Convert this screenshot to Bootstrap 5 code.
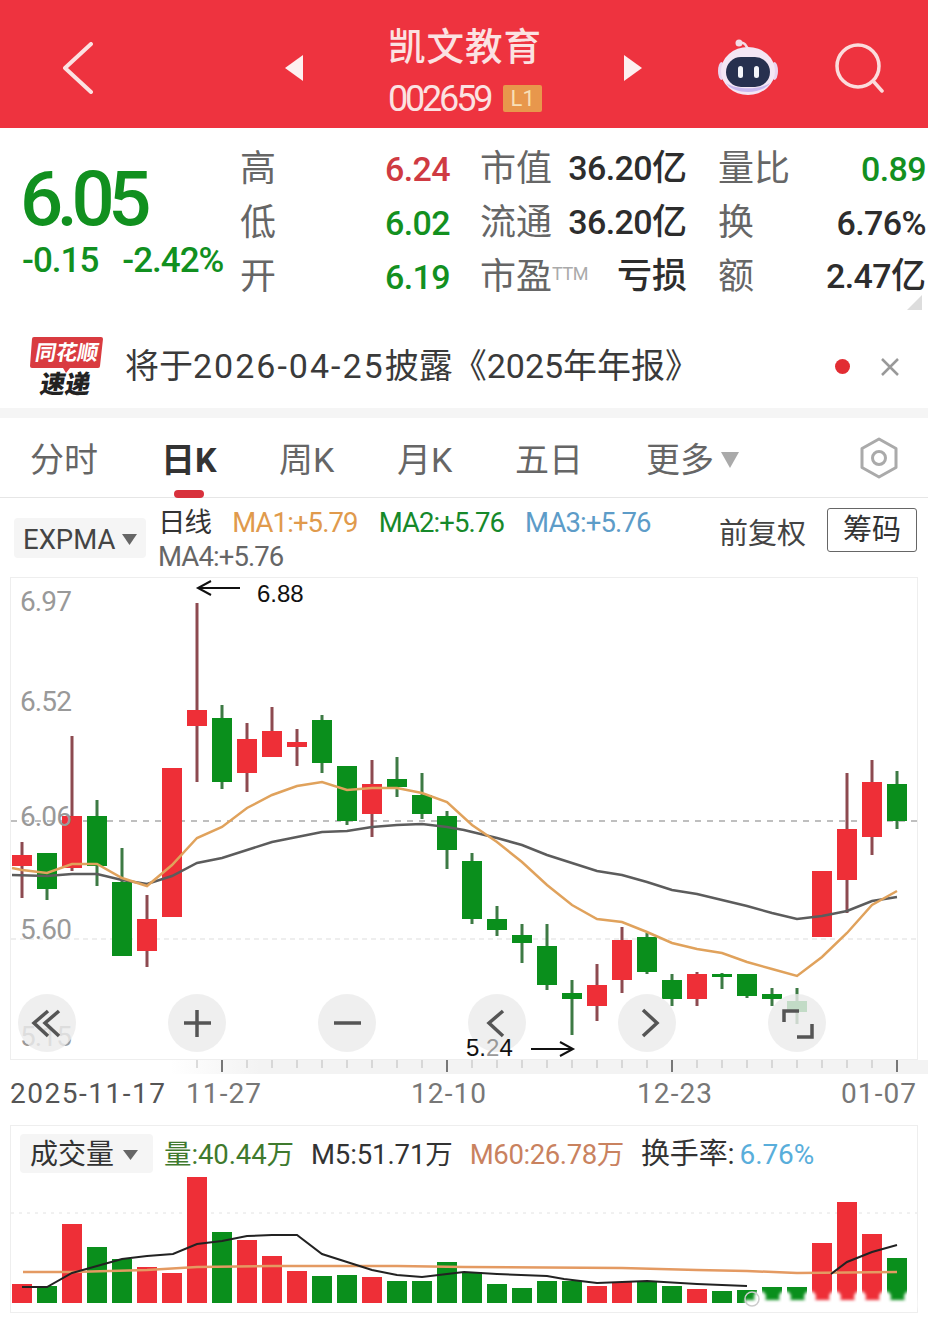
<!DOCTYPE html>
<html lang="zh-CN">
<head>
  <meta charset="UTF-8" />
  <title>凯文教育</title>
  <link href="https://cdn.jsdelivr.net/npm/bootstrap@5.3.0/dist/css/bootstrap.min.css" rel="stylesheet">
  <style>
    html, body { height: 1317px; overflow: hidden; }
    body { font-family: Roboto, "Noto Sans CJK SC", sans-serif; background: #fff; color: #333; }
    .stock-head { height: 128px; padding: 8px 0 0 63px; background: #ee333f; color: #fbe2e2; }
    .head-tri { margin-left: 192px; }
    .head-title { width: 236px; margin-left: 85px; padding-top: 4px; }
    .head-name { font-size: 37.5px; line-height: 46px; font-weight: 500; letter-spacing: 1px; }
    .head-code { margin-top: 11px; font-size: 36px; line-height: 36px; letter-spacing: -3.2px; }
    .head-l1 { width: 39px; height: 27px; margin-left: 13px; border-radius: 2px; background: #e8974c; font-size: 22px; line-height: 27px; letter-spacing: 0; text-align: center; color: #f8e0b8; }
    .head-robot { margin-left: 76px; }
    .head-search { margin-left: 57px; }

    .quote-box { height: 197px; position: relative; }
    .quote-main { width: 240px; padding: 33px 0 0 20px; color: #11901f; }
    .quote-price { font-size: 76px; line-height: 76px; font-weight: 500; letter-spacing: -6.4px; }
    .quote-sub { margin: 4px 0 0 2px; font-size: 35px; line-height: 40px; font-weight: 500; letter-spacing: -1px; white-space: nowrap; }
    .quote-sub span + span { margin-left: 24px; }
    .quote-grid { display: grid; grid-template-columns: 70px 140px 105px 132px 104px 135px; grid-auto-rows: 54px; padding-top: 14px; align-items: center; white-space: nowrap; }
    .q-label { font-size: 36px; color: #666; }
    .q-pad { padding-left: 30px; }
    .q-pad2 { padding-left: 31px; }
    .q-num { font-size: 34px; font-weight: 500; text-align: right; letter-spacing: -.6px; color: #2d2d2d; }
    .q-cn { font-size: 35px; font-weight: 500; letter-spacing: 0; }
    .q-red { color: #cf3a42; }
    .q-green { color: #13901f; }
    .q-ttm { font-size: 18px; color: #aaa; vertical-align: 9px; letter-spacing: -.5px; }
    .quote-corner { position: absolute; right: 6px; bottom: 15px; }

    .news-bar { height: 83px; padding-left: 30px; }
    .news-text { margin: 0 0 0 22px; font-size: 34px; color: #3a3a3a; white-space: nowrap; }
    .news-date { letter-spacing: 2px; }
    .news-dot { width: 15px; height: 15px; margin-left: auto; border-radius: 50%; background: #e22d33; }
    .news-close { margin: 0 29px 0 31px; }
    .gap-strip { height: 10px; background: #f5f5f5; }

    .tab-row { height: 80px; padding-left: 30px; border-bottom: 1px solid #e6e6e6; }
    .tab-item { position: relative; flex: 0 0 118px; height: 80px; padding: 4px 0 0; font-size: 34px; line-height: 76px; color: #666; white-space: nowrap; }
    .tab-item:hover { color: #666; }
    .tab-long { flex-basis: 131px; }
    .tab-on { font-weight: 700; color: #333; }
    .tab-on:hover { color: #333; }
    .tab-on::after { content: ""; position: absolute; left: 13px; bottom: 0; width: 30px; height: 8px; border-radius: 4px; background: #d8313c; }
    .tab-arrow { margin-left: 7px; vertical-align: 4px; }
    .tab-cfg { margin: 0 29px 0 auto; }

    .ind-row { height: 79px; padding-left: 14px; }
    .ind-chip { width: 132px; height: 40px; margin-top: 20px; padding-left: 9px; border-radius: 4px; background: #f5f5f5; font-size: 27.5px; line-height: 43px; color: #444; }
    .ind-chip svg { margin-left: 7px; vertical-align: 4px; }
    .ind-list { width: 540px; margin-left: 12px; padding-top: 8px; column-gap: 21px; font-size: 27.5px; line-height: 34px; letter-spacing: -.9px; }
    .ma1 { color: #e09a4c; }
    .ma2 { color: #16892a; }
    .ma3 { color: #5d9cc8; }
    .ma4 { color: #666; }
    .ind-fq { margin-top: 36px; margin-left: 21px; font-size: 29px; line-height: 0; color: #444; }
    .ind-btn { width: 90px; height: 44px; margin: 10px 0 0 21px; padding: 0; border: 1px solid #666; border-radius: 3px; font-size: 29px; line-height: 40px; color: #333; }

    .chart-box { width: 908px; margin: 0 10px; border: 1px solid #eee; background: #fff; }
    .chart-box svg { display: block; overflow: visible; }
    .axis-ticks { display: block; background: linear-gradient(90deg, #fff 170px, #f3f3f3 260px); }
    .axis-row { height: 51px; padding-left: 10px; font-size: 28px; line-height: 40px; letter-spacing: 1.1px; color: #777; white-space: nowrap; }
    .axis-row span:first-child { width: 176px; letter-spacing: 1.5px; color: #555; }
    .axis-row span:nth-child(2) { width: 225px; }
    .axis-row span:nth-child(3) { width: 226px; }
    .axis-row span:nth-child(4) { width: 204px; }
    .vol-head { height: 48px; padding: 8px 0 0 9px; font-size: 28px; white-space: nowrap; }
    .vol-chip { width: 133px; height: 39px; padding-left: 10px; border-radius: 4px; background: #f5f5f5; line-height: 41px; color: #333; }
    .vol-chip svg { display: inline; margin-left: 9px; vertical-align: 4px; }
    .vol-list { margin-left: 11px; column-gap: 17px; line-height: 41px; font-size: 27.5px; letter-spacing: -.1px; }
    .v-green { color: #3f7a2e; }
    .v-orange { color: #c9825f; letter-spacing: -.4px; }
    .v-turn { font-size: 29px; }
    .v-blue { margin-left: 5px; font-size: 28px; color: #59aedb; }
    .chart-num { font-family: Roboto, sans-serif; font-size: 28px; letter-spacing: -.9px; fill: #999; }
    .chart-note { font-family: "Liberation Sans", sans-serif; font-size: 24px; fill: #111; }
  </style>
</head>
<body>
  <header class="stock-head d-flex align-items-center">
    <svg width="30" height="52" viewBox="0 0 30 52"><path d="M28 2 2 26l26 24" fill="none" stroke="#fbe2e2" stroke-width="4" stroke-linecap="round" stroke-linejoin="round"/></svg>
    <svg class="head-tri" width="18" height="26" viewBox="0 0 18 26"><path d="M18 0v26L0 13z" fill="#fdf0f0"/></svg>
    <div class="head-title">
      <div class="head-name">凯文教育</div>
      <div class="head-code d-flex align-items-center">002659<span class="head-l1">L1</span></div>
    </div>
    <svg width="18" height="26" viewBox="0 0 18 26"><path d="M0 0v26l18-13z" fill="#fdf0f0"/></svg>
    <svg class="head-robot" width="60" height="58" viewBox="0 0 60 58">
      <path d="M30 12c-1-6-4-9-8-8" fill="none" stroke="#f3dce6" stroke-width="2.5"/>
      <circle cx="21" cy="4" r="3.5" fill="#f3dce6"/>
      <ellipse cx="3.5" cy="32" rx="3.5" ry="9" fill="#e9d4ee"/>
      <ellipse cx="56.500" cy="32" rx="3.5" ry="9" fill="#e9d4ee"/>
      <ellipse cx="30" cy="32" rx="27" ry="24" fill="#f4e6f4"/>
      <path d="M8 44c8 12 36 12 44 0-10 7-34 7-44 0z" fill="#c9b8ee"/>
      <rect x="8" y="18" width="44" height="30" rx="15" fill="#27304f"/>
      <rect x="20" y="27" width="5" height="12" rx="2.500" fill="#f5f5fa"/>
      <rect x="36" y="27" width="5" height="12" rx="2.500" fill="#f5f5fa"/>
    </svg>
    <svg class="head-search" width="50" height="50" viewBox="0 0 50 50"><circle cx="23" cy="23" r="21" fill="none" stroke="#fbdcdc" stroke-width="3.5"/><path d="M39 39l8 9" stroke="#fbdcdc" stroke-width="3.5" stroke-linecap="round"/></svg>
  </header>

  <section class="quote-box d-flex">
    <div class="quote-main">
      <div class="quote-price">6.05</div>
      <div class="quote-sub"><span>-0.15</span><span>-2.42%</span></div>
    </div>
    <div class="quote-grid">
      <div class="q-label">高</div><div class="q-num q-red">6.24</div>
      <div class="q-label q-pad">市值</div><div class="q-num">36.20<span class="q-cn">亿</span></div>
      <div class="q-label q-pad2">量比</div><div class="q-num q-green">0.89</div>
      <div class="q-label">低</div><div class="q-num q-green">6.02</div>
      <div class="q-label q-pad">流通</div><div class="q-num">36.20<span class="q-cn">亿</span></div>
      <div class="q-label q-pad2">换</div><div class="q-num">6.76%</div>
      <div class="q-label">开</div><div class="q-num q-green">6.19</div>
      <div class="q-label q-pad">市盈<span class="q-ttm">TTM</span></div><div class="q-num q-cn">亏损</div>
      <div class="q-label q-pad2">额</div><div class="q-num">2.47<span class="q-cn">亿</span></div>
    </div>
    <svg class="quote-corner" width="15" height="15" viewBox="0 0 15 15"><path d="M15 0v15H0z" fill="#ddd"/></svg>
  </section>

  <section class="news-bar d-flex align-items-center">
    <svg width="73" height="66" viewBox="0 -2 73 66">
      <path d="M4 1h67q2 0 2 2l-3 27q0 2-2 2H40l-4 5-3-5H2q-2 0-2-2L2 3q0-2 2-2z" fill="#d93b40"/>
      <text x="36" y="24" text-anchor="middle" transform="skewX(-10) translate(4 0)" font-family="Noto Sans CJK SC" font-size="21" font-weight="700" fill="#fff">同花顺</text>
      <text x="35" y="57" text-anchor="middle" transform="skewX(-10) translate(9 0)" font-family="Noto Sans CJK SC" font-size="25" font-weight="900" fill="#222">速递</text>
    </svg>
    <div class="news-text">将于<span class="news-date">2026-04-25</span>披露《2025年年报》</div>
    <div class="news-dot"></div>
    <svg class="news-close" width="18" height="18" viewBox="0 0 18 18"><path d="M1 1l16 16M17 1 1 17" stroke="#999" stroke-width="2.500"/></svg>
  </section>
  <div class="gap-strip"></div>

  <nav class="nav tab-row flex-nowrap align-items-center">
    <a class="nav-link tab-item tab-long" href="#">分时</a>
    <a class="nav-link tab-item tab-on" href="#">日K</a>
    <a class="nav-link tab-item" href="#">周K</a>
    <a class="nav-link tab-item" href="#">月K</a>
    <a class="nav-link tab-item tab-long" href="#">五日</a>
    <a class="nav-link tab-item" href="#">更多<svg class="tab-arrow" width="18" height="16" viewBox="0 0 18 16"><path d="M0 0h18L9 16z" fill="#aaa"/></svg></a>
    <svg class="tab-cfg" width="40" height="42" viewBox="0 0 40 42"><path d="M20 2 37 11.500v19L20 40 3 30.500v-19z" fill="none" stroke="#aaa" stroke-width="3" stroke-linejoin="round"/><circle cx="20" cy="21" r="6.500" fill="none" stroke="#aaa" stroke-width="3"/></svg>
  </nav>

  <section class="ind-row d-flex align-items-start">
    <div class="ind-chip">EXPMA<svg width="15" height="11" viewBox="0 0 15 11"><path d="M0 0h15L7.500 11z" fill="#666"/></svg></div>
    <div class="ind-list d-flex flex-wrap">
      <span>日线</span>
      <span class="ma1">MA1:+5.79</span>
      <span class="ma2">MA2:+5.76</span>
      <span class="ma3">MA3:+5.76</span>
      <span class="ma4">MA4:+5.76</span>
    </div>
    <div class="ind-fq">前复权</div>
    <button class="btn ind-btn" type="button">筹码</button>
  </section>

  <div class="chart-box"><svg id="kline" width="906" height="481" viewBox="11 578 906 481"></svg></div>
  <svg id="ticks" class="axis-ticks" width="928" height="14" viewBox="0 0 928 14"></svg>
  <div class="axis-row d-flex"><span>2025-11-17</span><span>11-27</span><span>12-10</span><span>12-23</span><span>01-07</span></div>

  <div class="chart-box">
    <div class="vol-head d-flex">
      <div class="vol-chip flex-shrink-0">成交量<svg width="15" height="10" viewBox="0 0 15 10"><path d="M0 0h15L7.500 10z" fill="#666"/></svg></div>
      <div class="vol-list d-flex">
        <span class="v-green">量:40.44万</span>
        <span>M5:51.71万</span>
        <span class="v-orange">M60:26.78万</span>
        <span class="v-turn">换手率:<span class="v-blue">6.76%</span></span>
      </div>
    </div>
    <svg id="volume" width="906" height="138" viewBox="11 1175 906 138"></svg>
  </div>

  <script src="https://cdn.jsdelivr.net/npm/bootstrap@5.3.0/dist/js/bootstrap.bundle.min.js"></script>
  <script>
    // hi, lo, body top, body bottom, colour (page pixels, read off the screenshot)
    const candles = [
      [842,898,855,866,"r"],[853,900,853,889,"g"],[736,871,816,868,"r"],[800,886,816,866,"g"],
      [848,956,882,956,"g"],[895,967,919,951,"r"],[768,917,768,917,"r"],[603,782,710,726,"r"],
      [705,789,718,782,"g"],[723,792,739,773,"r"],[707,757,731,757,"r"],[729,766,742,747,"r"],
      [715,773,720,763,"g"],[766,825,766,821,"g"],[760,837,784,814,"r"],[757,797,779,787,"g"],
      [773,819,795,814,"g"],[811,869,816,850,"g"],[853,924,861,919,"g"],[906,936,919,930,"g"],
      [924,963,935,943,"g"],[924,990,946,985,"g"],[980,1035,993,999,"g"],[964,1021,985,1006,"r"],
      [927,993,940,980,"r"],[933,974,937,972,"g"],[974,1006,980,999,"g"],[972,1006,974,999,"r"],
      [973,989,974,977,"g"],[974,998,974,996,"g"],[988,1006,994,999,"g"],[988,1024,1001,1012,"g"],
      [871,937,871,937,"r"],[773,913,829,880,"r"],[760,855,782,837,"r"],[771,829,784,821,"g"]
    ];
    const maOrange = "12,868 22,870 47,873 72,864 97,864 122,878 147,886 172,865 197,838 222,827 247,808 272,795 297,786 322,782 347,790 372,788 397,788 422,793 447,802 472,825 497,842 522,862 547,885 572,905 597,919 622,922 647,932 672,943 697,949 722,953 747,962 772,969 797,976 822,957 847,933 872,905 897,891";
    const maGray = "12,875 47,876 72,874 97,874 122,880 147,884 172,876 197,863 222,858 247,850 272,842 297,837 322,832 347,831 372,827 397,825 422,824 447,827 464,830 497,838 522,845 547,855 572,863 597,871 622,875 647,882 672,890 697,894 722,900 747,906 772,913 797,919 822,916 847,911 872,901 897,897";
    const volumes = [
      [1285,"r"],[1287,"g"],[1225,"r"],[1248,"g"],[1260,"g"],[1268,"r"],[1274,"r"],[1178,"r"],[1233,"g"],
      [1241,"r"],[1257,"r"],[1272,"r"],[1277,"g"],[1276,"g"],[1278,"r"],[1282,"g"],[1282,"g"],[1263,"g"],
      [1273,"g"],[1285,"g"],[1289,"g"],[1282,"g"],[1282,"g"],[1287,"r"],[1283,"r"],[1282,"g"],[1287,"g"],
      [1290,"r"],[1292,"g"],[1291,"g"],[1288,"g"],[1288,"g"],[1244,"r"],[1203,"r"],[1235,"r"],[1259,"g"]
    ];
    const volBlack = "22,1288 47,1288 72,1274 97,1267 122,1260 147,1257 173,1255 197,1245 222,1242 247,1237 272,1236 297,1236 322,1255 347,1263 372,1271 397,1276 422,1278 447,1275 464,1273 497,1275 547,1277 564,1280 597,1284 647,1282 697,1285 747,1287";
    const volBlack2 = "831,1275 847,1263 872,1253 897,1246";
    const volOrange = "23,1273 72,1273 147,1271 197,1268 272,1267 397,1267 464,1268 622,1269 697,1271 747,1272 797,1274 897,1273";
    const RED = "#ee2f37", GREEN = "#0a8f1c";
    const candleX = i => 22 + 25 * i;

    function drawKline() {
      let s = "";
      s += `<line x1="11" x2="917" y1="821" y2="821" stroke="#aaa" stroke-width="1.5" stroke-dasharray="6 6"/>`;
      s += `<line x1="11" x2="917" y1="939" y2="939" stroke="#ddd" stroke-dasharray="5 4"/>`;
      candles.forEach((c, i) => {
        const x = candleX(i);
        const wick = c[4] === "r" ? "#8d4a50" : "#3d7a44";
        s += `<rect x="${x - 1.5}" y="${c[0]}" width="3" height="${c[1] - c[0]}" fill="${wick}"/>`;
        s += `<rect x="${x - 10}" y="${c[2]}" width="20" height="${c[3] - c[2]}" fill="${c[4] === "r" ? RED : GREEN}"/>`;
      });
      s += `<polyline points="${maGray}" fill="none" stroke="#5c5c5c" stroke-width="2.5"/>`;
      s += `<polyline points="${maOrange}" fill="none" stroke="#e0a25c" stroke-width="2.5"/>`;
      [["6.97",611],["6.52",711],["6.06",826],["5.60",939],["5.15",1046]].forEach(l => {
        s += `<text class="chart-num" x="20" y="${l[1]}">${l[0]}</text>`;
      });
      s += `<path d="M240 588H199M211 581l-13 7 13 7" fill="none" stroke="#111" stroke-width="2"/>`;
      s += `<text class="chart-note" x="257" y="602">6.88</text>`;
      s += `<path d="M531 1049h41M560 1042l13 7-13 7" fill="none" stroke="#111" stroke-width="2"/>`;
      [47,197,347,497,647,797].forEach(x => {
        s += `<circle cx="${x}" cy="1023" r="29" fill="#ebebeb" fill-opacity=".82"/>`;
      });
      s += `<text class="chart-note" x="466" y="1056">5.<tspan fill="#999">2</tspan>4</text>`;
      s += `<g fill="none" stroke="#555" stroke-width="3.5">
        <path d="M48 1011 34 1023l14 13M59 1011l-14 12 14 13"/>
        <path d="M184 1023h27M197 1010v27"/>
        <path d="M334 1023h27"/>
        <path d="M503 1011l-14 12 14 13"/>
        <path d="M643 1010l14 13-14 13"/>
        <path d="M784 1022v-11h15M812 1024v13h-15"/>
      </g>`;
      document.getElementById("kline").innerHTML = s;
    }

    function drawTicks() {
      let s = "";
      for (let i = 7; i < candles.length; i++) {
        const major = (i - 8) % 9 === 0;
        s += `<rect x="${candleX(i) - (major ? 1 : .5)}" y="0" width="${major ? 2 : 1}" height="${major ? 12 : 8}" fill="${major ? "#777" : "#bbb"}"/>`;
      }
      document.getElementById("ticks").innerHTML = s;
    }

    function drawVolume() {
      let s = `<defs><filter id="soft" x="-20%" y="-50%" width="140%" height="200%"><feGaussianBlur stdDeviation="1.6"/></filter></defs>`;
      s += `<line x1="11" x2="917" y1="1214" y2="1214" stroke="#e2e2e2" stroke-dasharray="3 5"/>`;
      volumes.forEach((v, i) => {
        s += `<rect x="${candleX(i) - 10}" y="${v[0]}" width="20" height="${1304 - v[0]}" fill="${v[1] === "r" ? RED : GREEN}"/>`;
      });
      s += `<polyline points="${volOrange}" fill="none" stroke="#e49a62" stroke-width="2.5"/>`;
      s += `<polyline points="${volBlack}" fill="none" stroke="#222" stroke-width="2"/>`;
      s += `<polyline points="${volBlack2}" fill="none" stroke="#222" stroke-width="2"/>`;
      // washed-out watermark over the bottom right bars
      s += `<g fill="#fff" filter="url(#soft)"><rect x="745" y="1301" width="172" height="8"/>`;
      [760,785,810,835,860,885,910].forEach(x => { s += `<circle cx="${x}" cy="1298" r="6"/>`; });
      s += `</g>`;
      s += `<circle cx="752" cy="1300" r="7" fill="none" stroke="#ccc" stroke-width="1.5"/>`;
      document.getElementById("volume").innerHTML = s;
    }

    drawKline();
    drawTicks();
    drawVolume();
  </script>
</body>
</html>
